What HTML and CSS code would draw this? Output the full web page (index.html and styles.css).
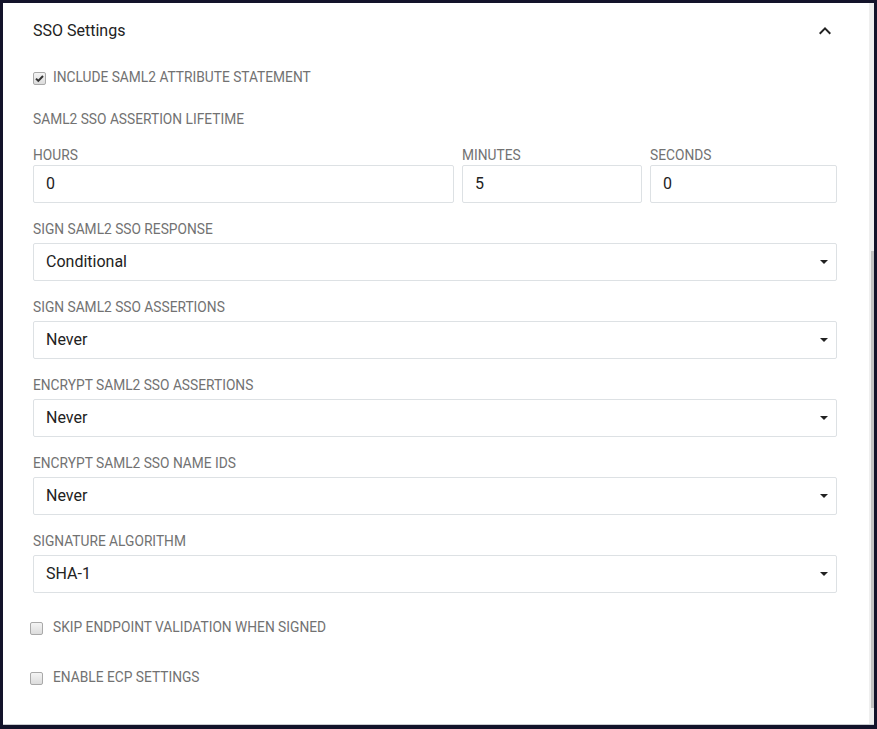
FILE: index.html
```html
<!DOCTYPE html>
<html lang="en">
<head>
  <meta charset="UTF-8" />
  <meta name="viewport" content="width=device-width, initial-scale=1.0"/>
  <title>SSO Settings</title>
  <link rel="stylesheet" href="styles.css">
</head>
<body>

  <div class="window">
    <div class="panel">

      <div class="panel-header">
        <h2>SSO Settings</h2>
        <svg class="chevron" width="24" height="24" viewBox="0 0 24 24">
          <path d="M12 8l-6 6 1.41 1.41L12 10.83l4.59 4.58L18 14z" fill="#222"/>
        </svg>
      </div>

      <label class="check-row first">
        <span class="box checked">
          <svg width="11" height="11" viewBox="0 0 11 11"><path d="M2 5.6l2.3 2.3L9 3" fill="none" stroke="#333" stroke-width="2"/></svg>
        </span>
        INCLUDE SAML2 ATTRIBUTE STATEMENT
      </label>

      <div class="section-title">SAML2 SSO ASSERTION LIFETIME</div>

      <div class="time-row">
        <div class="time-field">
          <div class="label">HOURS</div>
          <div class="input">0</div>
        </div>
        <div class="time-field">
          <div class="label">MINUTES</div>
          <div class="input">5</div>
        </div>
        <div class="time-field">
          <div class="label">SECONDS</div>
          <div class="input">0</div>
        </div>
      </div>

      <div class="field">
        <div class="label">SIGN SAML2 SSO RESPONSE</div>
        <div class="input select">Conditional <span class="caret"></span></div>
      </div>

      <div class="field">
        <div class="label">SIGN SAML2 SSO ASSERTIONS</div>
        <div class="input select">Never <span class="caret"></span></div>
      </div>

      <div class="field">
        <div class="label">ENCRYPT SAML2 SSO ASSERTIONS</div>
        <div class="input select">Never <span class="caret"></span></div>
      </div>

      <div class="field">
        <div class="label">ENCRYPT SAML2 SSO NAME IDS</div>
        <div class="input select">Never <span class="caret"></span></div>
      </div>

      <div class="field">
        <div class="label">SIGNATURE ALGORITHM</div>
        <div class="input select">SHA-1 <span class="caret"></span></div>
      </div>

      <label class="check-row skip">
        <span class="box"></span>
        SKIP ENDPOINT VALIDATION WHEN SIGNED
      </label>

      <label class="check-row ecp">
        <span class="box"></span>
        ENABLE ECP SETTINGS
      </label>

    </div>

    <div class="scrollbar">
      <div class="thumb"></div>
    </div>
  </div>

</body>
</html>
```

FILE: styles.css
```css
body {
  margin: 0;
  padding: 3px 3px 4px 3px;
  background-color: #13132a;
  font-family: Roboto, "Liberation Sans", Arial, sans-serif;
}

.window {
  display: flex;
  height: 722px;
  border-bottom: 1px solid #c9ccd0;
  box-sizing: border-box;
}

.panel {
  flex: 1;
  background-color: #fff;
  padding: 18px 32px 0 30px;
}

.scrollbar {
  width: 5px;
  background-color: #efefef;
}

.thumb {
  margin-top: 248px;
  margin-left: 2px;
  width: 3px;
  height: 457px;
  background-color: #c3c3c3;
}

.panel-header {
  display: flex;
  align-items: center;
  justify-content: space-between;
  height: 20px;
}

.panel-header h2 {
  margin: 0;
  font-size: 16px;
  font-weight: 400;
  line-height: 20px;
  color: #222;
}

.chevron {
  display: block;
}

.check-row {
  display: flex;
  align-items: center;
  font-size: 13.75px;
  line-height: 16px;
  color: #727272;
}

.check-row.first {
  margin-top: 28px;
  gap: 7px;
}

.check-row.skip {
  margin-top: 26px;
  margin-left: -3px;
  gap: 10px;
}

.check-row.ecp {
  margin-top: 34px;
  margin-left: -3px;
  gap: 10px;
}

.box {
  width: 11px;
  height: 11px;
  border: 1px solid #a9a9a9;
  border-radius: 2px;
  background: linear-gradient(#f4f4f4, #dcdcdc);
  display: flex;
  align-items: center;
  justify-content: center;
  margin-top: 2px;
}

.box svg {
  display: block;
}

.section-title {
  margin-top: 26px;
  font-size: 13.75px;
  line-height: 16px;
  color: #727272;
}

.label {
  font-size: 13.75px;
  line-height: 16px;
  color: #727272;
}

.time-row {
  display: grid;
  grid-template-columns: 421px 180px 1fr;
  gap: 8px;
  margin-top: 20px;
}

.time-row .input {
  margin-top: 2px;
}

.input {
  height: 38px;
  box-sizing: border-box;
  border: 1px solid #dde1e4;
  border-radius: 2px;
  padding: 0 12px 1px;
  display: flex;
  align-items: center;
  font-size: 16px;
  color: #222;
}

.field {
  margin-top: 18px;
}

.field .input {
  margin-top: 6px;
}

.select {
  justify-content: space-between;
}

.caret {
  width: 0;
  height: 0;
  border-left: 4px solid transparent;
  border-right: 4px solid transparent;
  border-top: 4px solid #222;
  margin-right: -4px;
}
```
